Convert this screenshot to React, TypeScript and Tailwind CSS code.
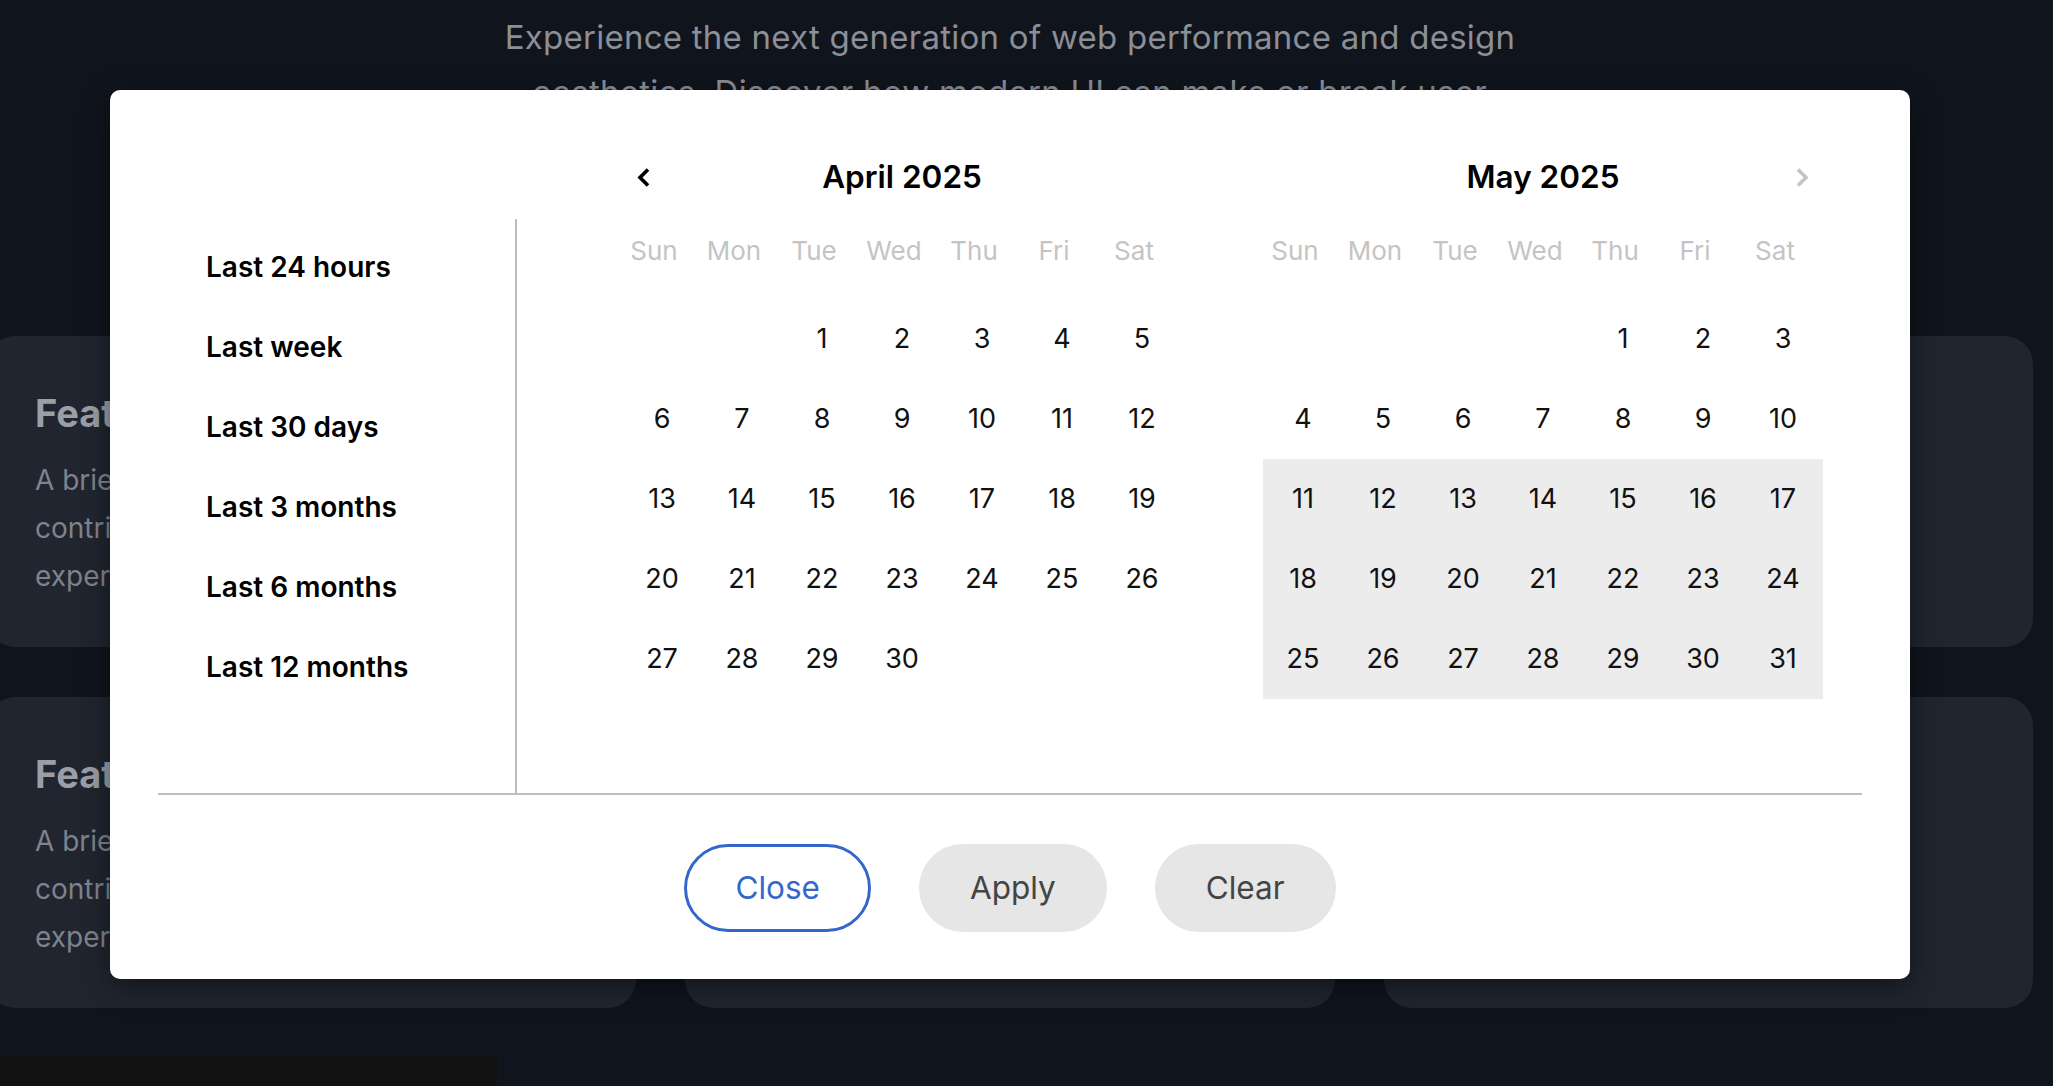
import React from "react";

const PRESETS = [
  "Last 24 hours",
  "Last week",
  "Last 30 days",
  "Last 3 months",
  "Last 6 months",
  "Last 12 months",
];

const WEEKDAYS = ["Sun", "Mon", "Tue", "Wed", "Thu", "Fri", "Sat"];

interface MonthData {
  title: string;
  offset: number;
  days: number;
  side: "prev" | "next";
  rangeFrom?: number;
}

const MONTHS: MonthData[] = [
  { title: "April 2025", offset: 2, days: 30, side: "prev" },
  { title: "May 2025", offset: 4, days: 31, side: "next", rangeFrom: 11 },
];

const CARD_ROWS = [
  ["Feature One", "Feature Two", "Feature Three"],
  ["Feature Four", "Feature Five", "Feature Six"],
];

function Chevron({ dir }: { dir: "left" | "right" }) {
  return (
    <svg width="15" height="21" viewBox="0 0 15 21" fill="none">
      {dir === "left" ? (
        <polyline
          points="12,2.5 4,10.5 12,18.5"
          stroke="#000000"
          strokeWidth="3.6"
          strokeLinecap="butt"
          strokeLinejoin="miter"
        />
      ) : (
        <polyline
          points="3,2.5 11,10.5 3,18.5"
          stroke="#c4c4c4"
          strokeWidth="3.6"
          strokeLinecap="butt"
          strokeLinejoin="miter"
        />
      )}
    </svg>
  );
}

function Month({ m }: { m: MonthData }) {
  const cells: (number | null)[] = [];
  for (let i = 0; i < m.offset; i++) cells.push(null);
  for (let d = 1; d <= m.days; d++) cells.push(d);
  while (cells.length % 7 !== 0) cells.push(null);

  return (
    <div className="w-[560px] flex flex-col">
      <div className="h-[60px] flex items-center">
        <div className="w-[42px] flex justify-center">
          {m.side === "prev" && <Chevron dir="left" />}
        </div>
        <div className="flex-1 text-center text-[31.5px] font-semibold text-black">
          {m.title}
        </div>
        <div className="w-[42px] flex justify-center">
          {m.side === "next" && <Chevron dir="right" />}
        </div>
      </div>

      <div className="mt-[3px] h-[80px] grid grid-cols-7 ml-[-8px] mr-[8px]">
        {WEEKDAYS.map((w) => (
          <div
            key={w}
            className="flex items-center justify-center text-[26px] text-[#c4c4c4]"
          >
            {w}
          </div>
        ))}
      </div>

      <div className="mt-[9px] grid grid-cols-7">
        {cells.map((d, i) => {
          const inRange = d !== null && m.rangeFrom !== undefined && d >= m.rangeFrom;
          return (
            <div
              key={i}
              className={
                "h-[80px] flex items-center justify-center text-[27px] text-[#111111] " +
                (inRange ? "bg-[#ececec]" : "")
              }
            >
              {d}
            </div>
          );
        })}
      </div>
    </div>
  );
}

function DateRangeModal() {
  return (
    <div className="absolute left-[110px] top-[90px] w-[1800px] h-[889px] bg-white rounded-[10px] shadow-[0_8px_28px_rgba(0,0,0,0.45)] px-[48px]">
      <div className="h-[705px] flex border-b-2 border-[#bdbdbd]">
        <div className="w-[359px] mt-[129px] border-r-2 border-[#bdbdbd] pt-[8px] pl-[48px]">
          {PRESETS.map((p) => (
            <div
              key={p}
              className="h-[80px] flex items-center text-[28px] font-semibold text-black"
            >
              {p}
            </div>
          ))}
        </div>
        <div className="flex-1 pl-[105px] pt-[57px] flex gap-[81px]">
          {MONTHS.map((m) => (
            <Month key={m.title} m={m} />
          ))}
        </div>
      </div>

      <div className="pt-[49px] flex justify-center gap-[48px]">
        <button className="h-[88px] px-[48px] rounded-full border-[3px] border-[#3467c9] bg-white text-[31.5px] text-[#3467c9]">
          Close
        </button>
        <button className="h-[88px] px-[48px] rounded-full border-[3px] border-transparent bg-[#e6e6e6] text-[31.5px] text-[#444444]">
          Apply
        </button>
        <button className="h-[88px] px-[48px] rounded-full border-[3px] border-transparent bg-[#e6e6e6] text-[31.5px] text-[#444444]">
          Clear
        </button>
      </div>
    </div>
  );
}

export default function App() {
  return (
    <div className="relative h-[1086px] w-full overflow-hidden bg-[#10141c] font-['Inter',sans-serif]">
      <div className="w-[2020px]">
        <p className="pt-[10px] text-center text-[33px] tracking-[0.25px] leading-[55px] text-[#8b8f97]">
          <span className="block whitespace-nowrap">
            Experience the next generation of web performance and design
          </span>
          <span className="block whitespace-nowrap">
            aesthetics. Discover how modern UI can make or break user
          </span>
          <span className="block whitespace-nowrap">experiences.</span>
        </p>

        <div className="absolute top-[336px] left-[-13px] w-[2046px] flex flex-col gap-[50px]">
          {CARD_ROWS.map((row, r) => (
            <div key={r} className="grid grid-cols-3 gap-[49px]">
              {row.map((t) => (
                <div
                  key={t}
                  className="h-[311px] rounded-[28px] bg-[#20252f] p-[48px]"
                >
                  <h3 className="pt-[6px] text-[38px] font-bold leading-[46px] text-[#9a9ea6]">
                    {t}
                  </h3>
                  <p className="mt-[20px] text-[28px] leading-[48px] text-[#7e838c]">
                    <span className="block whitespace-nowrap">A brief description of this feature</span>
                    <span className="block whitespace-nowrap">contributes to the overall user</span>
                    <span className="block whitespace-nowrap">experience of the product.</span>
                  </p>
                </div>
              ))}
            </div>
          ))}
        </div>
      </div>

      <div className="absolute left-0 bottom-0 w-[497px] h-[30px] bg-[#111111]" />

      <DateRangeModal />
    </div>
  );
}
